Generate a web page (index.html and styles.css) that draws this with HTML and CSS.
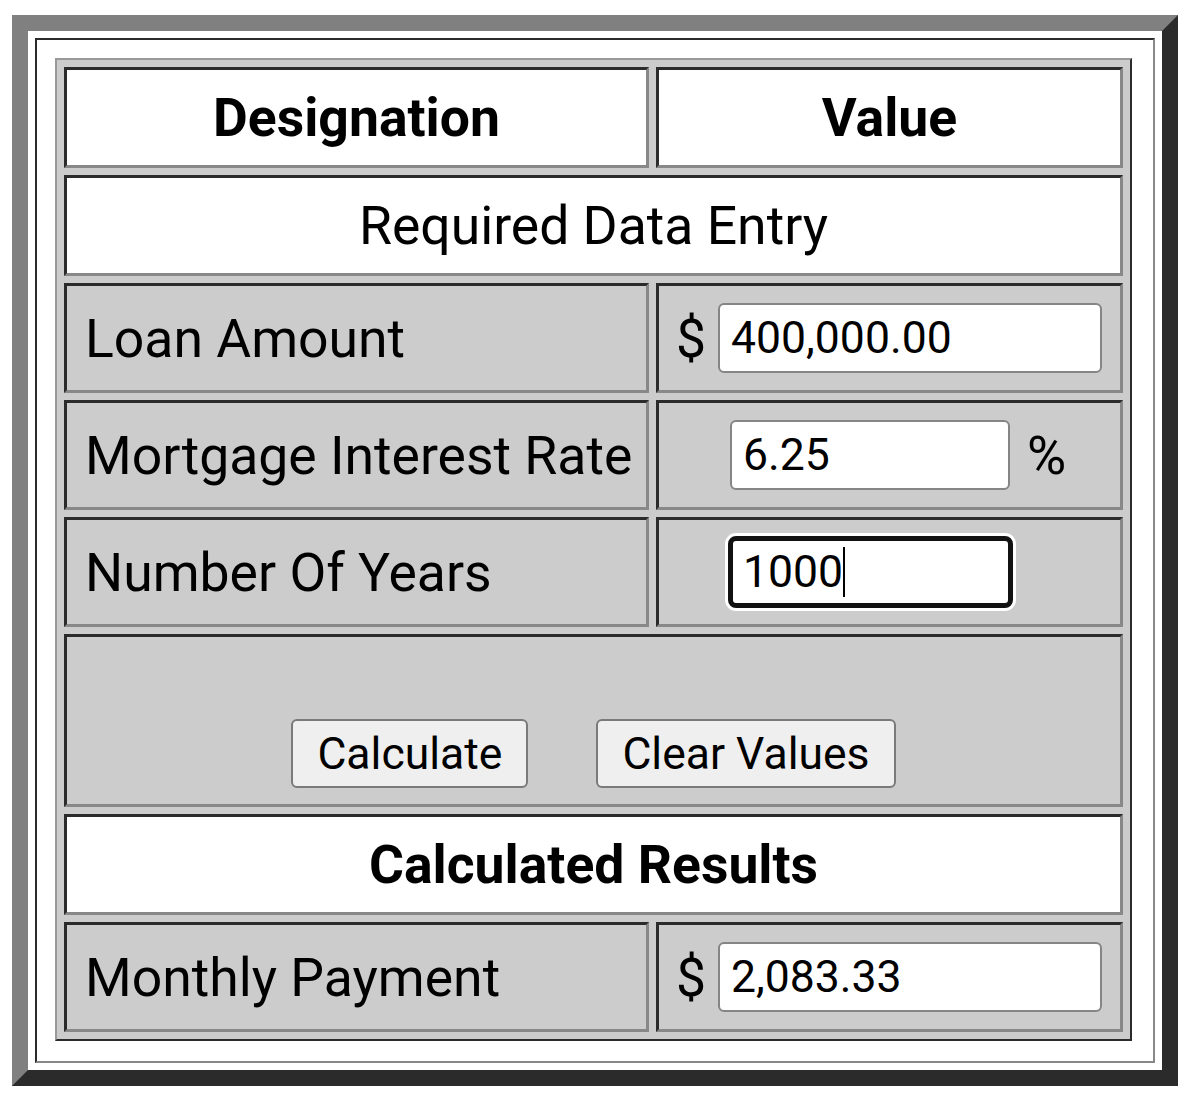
FILE: index.html
```html
<!DOCTYPE html>
<html lang="en">
<head>
    <meta charset="UTF-8">
    <meta name="viewport" content="width=device-width, initial-scale=1.0">
    <title>Mortgage Payment Calculator</title>
    <link rel="stylesheet" href="styles.css">
</head>
<body>
    <div class="frame">
        <div class="panel">
            <form id="calcForm">
            <table class="calc">
                <tr class="row-head">
                    <th class="name-col">Designation</th>
                    <th>Value</th>
                </tr>
                <tr class="row-section">
                    <td colspan="2">Required Data Entry</td>
                </tr>
                <tr class="row-entry">
                    <td class="label"><label for="loan">Loan Amount</label></td>
                    <td class="value">
                        <div class="line money">
                            <span class="unit">$</span>
                            <input type="text" id="loan" class="num wide" value="400,000.00">
                        </div>
                    </td>
                </tr>
                <tr class="row-entry">
                    <td class="label"><label for="rate">Mortgage Interest Rate</label></td>
                    <td class="value">
                        <div class="line rate">
                            <input type="text" id="rate" class="num short" value="6.25">
                            <span class="unit">%</span>
                        </div>
                    </td>
                </tr>
                <tr class="row-entry">
                    <td class="label"><label for="years">Number Of Years</label></td>
                    <td class="value">
                        <div class="line years">
                            <div class="num short focused" id="years"><span>1000</span><span class="caret"></span></div>
                        </div>
                    </td>
                </tr>
                <tr class="row-buttons">
                    <td colspan="2">
                        <div class="buttons">
                            <button type="button" id="calcBtn">Calculate</button>
                            <button type="reset">Clear Values</button>
                        </div>
                    </td>
                </tr>
                <tr class="row-head">
                    <th colspan="2">Calculated Results</th>
                </tr>
                <tr class="row-entry">
                    <td class="label"><label for="payment">Monthly Payment</label></td>
                    <td class="value">
                        <div class="line money">
                            <span class="unit">$</span>
                            <input type="text" id="payment" class="num wide" value="2,083.33" readonly>
                        </div>
                    </td>
                </tr>
            </table>
            </form>
        </div>
    </div>
</body>
</html>
```

FILE: styles.css
```css
body { margin: 0; background: #fff; font-family: Roboto, "Liberation Sans", sans-serif; color: #000; }

/* double bevelled frame around the calculator */
.frame { width: 1166px; box-sizing: border-box; margin: 15px 0 0 12px; padding: 7px; background: #fff; border: 16px solid; border-color: #808080 #2b2b2b #2b2b2b #808080; }
.panel { padding: 18px 21px 20px 18px; border: 2px solid; border-color: #2b2b2b #888 #888 #2b2b2b; }

.calc { width: 100%; table-layout: fixed; border-collapse: separate; border-spacing: 7px; background: #ccc; border: 2px solid; border-color: #999 #2b2b2b #2b2b2b #999; }
.calc th, .calc td { box-sizing: border-box; padding: 0; font-size: 53.5px; white-space: nowrap; border: 3px solid; border-color: #2b2b2b #888 #888 #2b2b2b; }
.calc th { font-weight: bold; background: #fff; }
.name-col { width: 585px; }

.row-head { height: 101px; }
.row-section { height: 101px; }
.row-section td { background: #fff; text-align: center; }
.row-entry { height: 110px; }
.row-buttons { height: 173px; }

.label { background: #ccc; padding-left: 18px !important; }
.value { background: #ccc; }

.line { display: flex; align-items: center; }
.money { padding-left: 17px; gap: 12px; }
.rate { padding-left: 71px; gap: 17px; }
.years { padding-left: 69px; }

.num { box-sizing: border-box; height: 70px; padding: 0 11px; font-family: Roboto, "Liberation Sans", sans-serif; font-size: 44.5px; color: #000; background: #fff; border: 2px solid #858585; border-radius: 6px; }
.wide { width: 384px; }
.short { width: 280px; }

/* field with keyboard focus */
.focused { display: flex; align-items: center; width: 285px; height: 72px; padding-left: 10px; border: 5px solid #111; border-radius: 8px; box-shadow: 0 0 0 3px #fff; }
.caret { display: inline-block; width: 2px; height: 50px; background: #000; }

.row-buttons td { vertical-align: top; padding-top: 82px; }
.buttons { display: flex; justify-content: center; gap: 68px; }
button { height: 69px; padding: 0 24px; font-family: Roboto, "Liberation Sans", sans-serif; font-size: 44.5px; color: #000; background: #efefef; border: 2px solid #7a7a7a; border-radius: 6px; cursor: pointer; }
```
